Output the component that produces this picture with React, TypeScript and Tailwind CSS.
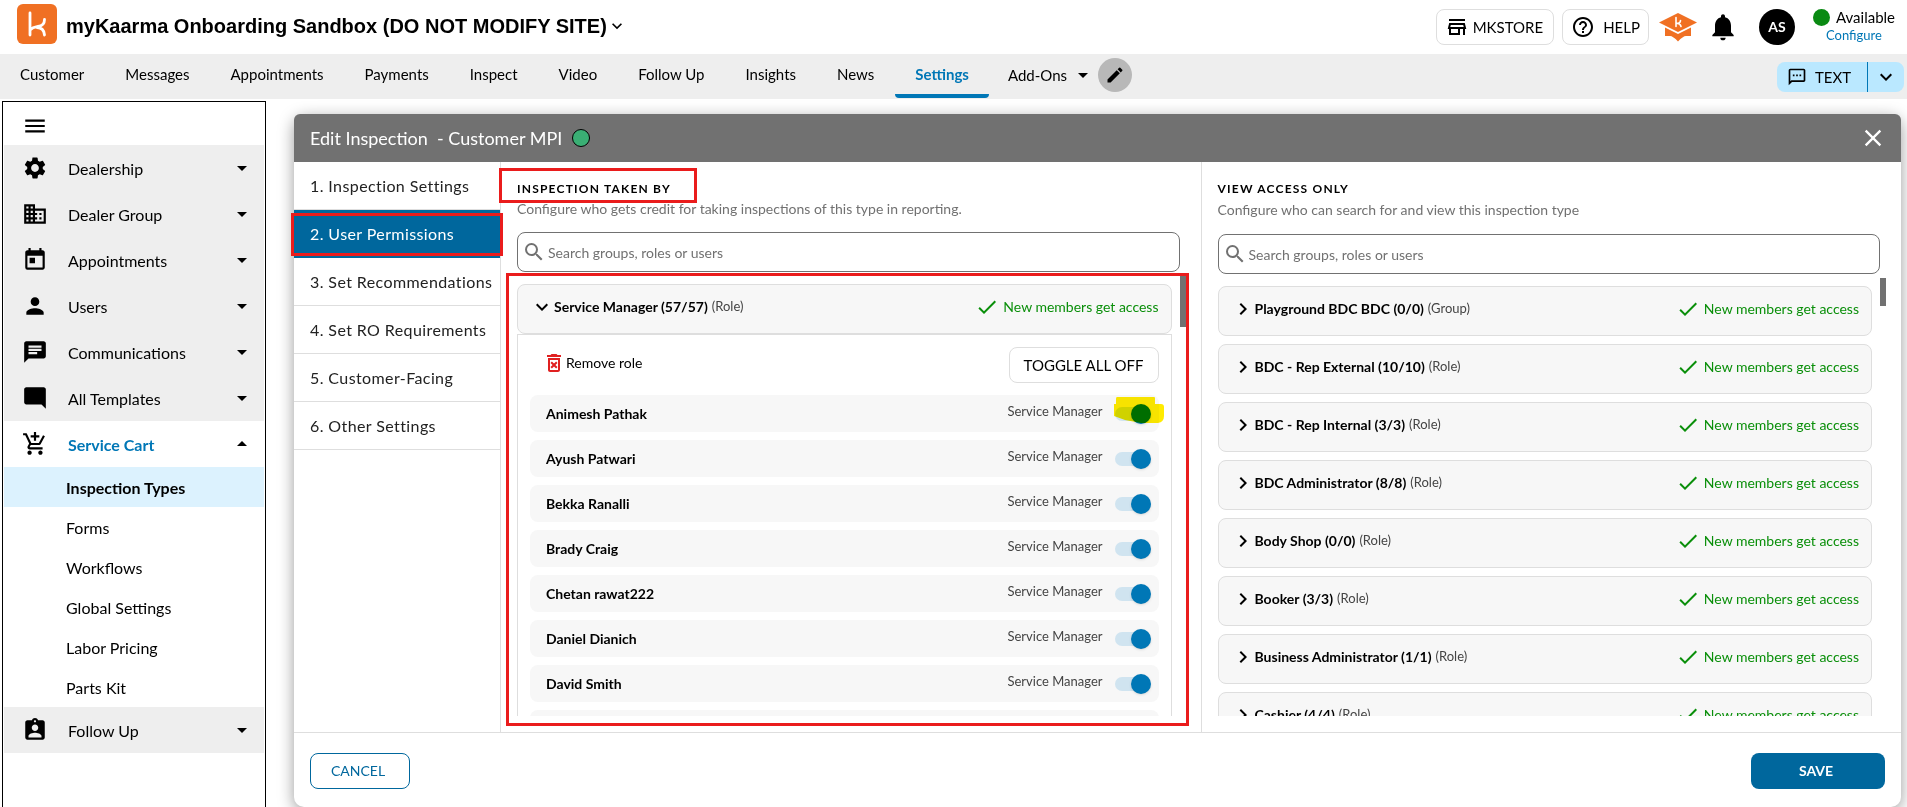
import type { ReactNode } from "react";
import type { IconType } from "react-icons";
import {
  MdAddShoppingCart,
  MdArrowDropDown,
  MdArrowDropUp,
  MdAssignmentInd,
  MdChat,
  MdCheck,
  MdChevronRight,
  MdClose,
  MdDomain,
  MdEdit,
  MdExpandMore,
  MdHelpOutline,
  MdMenu,
  MdModeComment,
  MdNotifications,
  MdOutlineDeleteForever,
  MdOutlineSms,
  MdPerson,
  MdSearch,
  MdSettings,
  MdToday,
} from "react-icons/md";

const navItems = [
  "Customer",
  "Messages",
  "Appointments",
  "Payments",
  "Inspect",
  "Video",
  "Follow Up",
  "Insights",
  "News",
  "Settings",
];

const sidebarItems: { label: string; icon: IconType }[] = [
  { label: "Dealership", icon: MdSettings },
  { label: "Dealer Group", icon: MdDomain },
  { label: "Appointments", icon: MdToday },
  { label: "Users", icon: MdPerson },
  { label: "Communications", icon: MdChat },
  { label: "All Templates", icon: MdModeComment },
];

const serviceCartItems = ["Inspection Types", "Forms", "Workflows", "Global Settings", "Labor Pricing", "Parts Kit"];

const steps = [
  "1. Inspection Settings",
  "2. User Permissions",
  "3. Set Recommendations",
  "4. Set RO Requirements",
  "5. Customer-Facing",
  "6. Other Settings",
];

const members = [
  "Animesh Pathak",
  "Ayush Patwari",
  "Bekka Ranalli",
  "Brady Craig",
  "Chetan rawat222",
  "Daniel Dianich",
  "David Smith",
];

const viewRoles = [
  { name: "Playground BDC BDC (0/0)", kind: "Group" },
  { name: "BDC - Rep External (10/10)", kind: "Role" },
  { name: "BDC - Rep Internal (3/3)", kind: "Role" },
  { name: "BDC Administrator (8/8)", kind: "Role" },
  { name: "Body Shop (0/0)", kind: "Role" },
  { name: "Booker (3/3)", kind: "Role" },
  { name: "Business Administrator (1/1)", kind: "Role" },
  { name: "Cashier (4/4)", kind: "Role" },
];

const KaarmaLogo = () => (
  <svg className="h-10 w-10" viewBox="0 0 40 40" aria-label="myKaarma" role="img">
    <rect width="40" height="40" rx="6" fill="#f07023" />
    <path
      d="M13 9v22M13 26c3-3 5-3 8-3.500 4-.5 6.500-3 6.500-7M20 23.500c4 0 7 2 7.500 7.500"
      fill="none"
      stroke="#fff"
      strokeWidth="2.800"
      strokeLinecap="round"
      strokeLinejoin="round"
    />
  </svg>
);

const StoreIcon = () => (
  <svg className="h-5 w-5" viewBox="0 0 20 20" fill="none" stroke="currentColor" strokeWidth="2" aria-hidden="true">
    <path d="M2 3h16M3 7h14l1 4H2zM3 11v6h9v-6M17 11v7" />
  </svg>
);

const CapIcon = () => (
  <svg className="h-8 w-[38px]" viewBox="0 0 38 32" aria-hidden="true">
    <path d="M19 2l19 9.500-19 9.500-19-9.500z" fill="#f07023" />
    <path d="M6 16.500l13 6.500 13-6.500V25h-5q-3 0-8 5.500Q14 25 11 25H6z" fill="#f07023" />
    <path
      d="M17 6.500v9M17 12.500c2.500 0 4.500-.5 4.500-3M18.500 12.500c2 0 3 1 3.500 3"
      fill="none"
      stroke="#fff"
      strokeWidth="1.600"
      strokeLinecap="round"
    />
  </svg>
);

const Header = () => (
  <header className="flex h-[54px] items-center justify-between pl-[17px] pr-3">
    <div className="flex items-center gap-[9px] pb-1.5">
      <KaarmaLogo />
      <button className="flex items-center pt-1 font-['Liberation_Sans',sans-serif] text-xl font-bold">
        myKaarma Onboarding Sandbox (DO NOT MODIFY SITE)
        <MdExpandMore className="h-5 w-5" />
      </button>
    </div>
    <div className="flex items-center text-[15px]">
      <button className="flex h-9 items-center gap-1.5 rounded-lg border border-[#dedede] px-2.5">
        <StoreIcon />
        MKSTORE
      </button>
      <button className="ml-2 flex h-9 items-center gap-2 rounded-lg border border-[#dedede] px-2">
        <MdHelpOutline className="h-6 w-6" />
        HELP
      </button>
      <button className="ml-2.5" aria-label="Training">
        <CapIcon />
      </button>
      <button className="ml-2.5" aria-label="Notifications">
        <MdNotifications className="h-8 w-8" />
      </button>
      <button className="ml-5 flex h-9 w-9 items-center justify-center rounded-full bg-black text-sm font-bold text-white">
        AS
      </button>
      <div className="ml-[18px] flex flex-col items-center pb-1">
        <span className="flex items-center gap-1.5 leading-5">
          <span className="h-[17px] w-[17px] rounded-full bg-[#0a8a12]" />
          Available
        </span>
        <a href="#" className="text-[13px] leading-4 text-[#0077b6]">
          Configure
        </a>
      </div>
    </div>
  </header>
);

const Navbar = () => (
  <nav className="flex h-[45px] items-start justify-between bg-[#eeeeee] pr-[3px] text-[15px]">
    <div className="flex h-full items-start gap-px">
      {navItems.map((item) =>
        item === "Settings" ? (
          <a
            key={item}
            href="#"
            className="h-11 rounded-b-sm border-b-4 border-[#0077b6] px-5 pt-[9px] font-bold text-[#0077b6]"
          >
            {item}
          </a>
        ) : (
          <a key={item} href="#" className="h-11 px-5 pt-[9px]">
            {item}
          </a>
        )
      )}
      <button className="flex items-center gap-1 pl-[18px] pt-[9px]">
        Add-Ons
        <MdArrowDropDown className="h-6 w-6" />
      </button>
      <button
        className="ml-0.5 mt-1 flex h-[34px] w-[34px] items-center justify-center rounded-full bg-[#b8b8b8]"
        aria-label="Edit menu"
      >
        <MdEdit className="h-5 w-5" />
      </button>
    </div>
    <div className="mt-2 flex h-[30px] rounded-lg bg-[#bae8ff]">
      <button className="flex items-center gap-2 pl-2.5 pr-4">
        <MdOutlineSms className="h-5 w-5" />
        TEXT
      </button>
      <button className="flex w-[37px] items-center justify-center border-l border-[#0077b6]" aria-label="More text options">
        <MdExpandMore className="h-6 w-6" />
      </button>
    </div>
  </nav>
);

const SidebarRow = ({ label, icon: Icon }: { label: string; icon: IconType }) => (
  <button className="flex h-[46px] w-full items-center bg-[#eeeeee] pl-[18px] pr-2.5">
    <Icon className="h-[26px] w-[26px]" />
    <span className="ml-5 mt-0.5 flex-1 text-left">{label}</span>
    <MdArrowDropDown className="h-6 w-6" />
  </button>
);

const Sidebar = () => (
  <aside className="ml-0.5 mt-0.5 w-[264px] shrink-0 border border-b-0 border-black px-px">
    <button className="flex h-[43px] items-center pl-[18px] pt-1" aria-label="Menu">
      <MdMenu className="h-[26px] w-[26px]" />
    </button>
    {sidebarItems.map((item) => (
      <SidebarRow key={item.label} {...item} />
    ))}
    <button className="flex h-[46px] w-full items-center pl-[18px] pr-2.5">
      <MdAddShoppingCart className="h-[26px] w-[26px]" />
      <span className="ml-5 mt-0.5 flex-1 text-left font-bold text-[#0077b6]">Service Cart</span>
      <MdArrowDropUp className="h-6 w-6" />
    </button>
    {serviceCartItems.map((item) =>
      item === "Inspection Types" ? (
        <a key={item} href="#" className="flex h-10 items-center bg-[#dcf2fe] pl-[62px] pt-0.5 font-bold">
          {item}
        </a>
      ) : (
        <a key={item} href="#" className="flex h-10 items-center pl-[62px] pt-0.5">
          {item}
        </a>
      )
    )}
    <SidebarRow label="Follow Up" icon={MdAssignmentInd} />
  </aside>
);

const SearchBox = ({ id }: { id: string }) => (
  <div className="flex h-10 shrink-0 items-center rounded-lg border border-[#717171] pl-1">
    <label htmlFor={id} aria-label="Search">
      <MdSearch className="h-6 w-6 text-[#717171]" />
    </label>
    <input
      id={id}
      type="text"
      placeholder="Search groups, roles or users"
      className="ml-0.5 h-full flex-1 bg-transparent text-sm placeholder-[#717171] outline-none"
    />
  </div>
);

const NewMembers = () => (
  <span className="flex items-center gap-1 text-sm text-[#0a8f0a]">
    <MdCheck className="h-6 w-6" />
    New members get access
  </span>
);

const RoleCard = ({ name, kind, open }: { name: string; kind: string; open?: boolean }) => (
  <button className="flex h-[50px] w-full shrink-0 items-center rounded-lg border border-[#dedede] bg-[#f7f7f7] px-3 pb-1">
    {open ? <MdExpandMore className="h-6 w-6" /> : <MdChevronRight className="h-6 w-6" />}
    <span className="text-sm font-bold">{name}</span>
    <span className="ml-1 flex-1 text-left text-[13px] text-[#444444]">({kind})</span>
    <NewMembers />
  </button>
);

const MemberRow = ({ name, highlighted }: { name: string; highlighted?: boolean }) => {
  const id = name.toLowerCase().replace(" ", "-");
  return (
    <li className="flex h-[37px] shrink-0 items-center rounded-lg bg-[#f7f7f7] pl-4 pr-2">
      <label htmlFor={id} className="flex-1 text-sm font-bold">
        {name}
      </label>
      <span className="mr-3 pb-1 text-[13px] text-[#444444]">Service Manager</span>
      <span className="relative flex items-center">
        <input
          id={id}
          type="checkbox"
          role="switch"
          defaultChecked
          className="relative h-3.5 w-9 appearance-none before:absolute before:inset-y-0 before:left-0 before:w-8 before:rounded-full before:bg-[#d0e4f0] after:absolute after:-top-[3px] after:right-0 after:h-5 after:w-5 after:rounded-full after:bg-[#0077b6] after:shadow"
        />
        {highlighted && (
          <svg
            className="pointer-events-none absolute -left-px -top-2.5 h-[27px] w-[50px] mix-blend-multiply"
            viewBox="0 0 50 27"
            aria-hidden="true"
          >
            <path d="M3 0h37q1 0 1 1v6h6q3 0 3 3v9q0 6-6 7H27L11 23 0 19V7h2V2q0-2 1-2z" fill="#ffeb00" />
          </svg>
        )}
      </span>
    </li>
  );
};

const Column = ({ children }: { children: ReactNode }) => (
  <section className="relative flex min-h-0 min-w-0 flex-1 flex-col pb-4 pl-4 pr-[21px] pt-[19px]">{children}</section>
);

const TakenBy = () => (
  <Column>
    <h2 className="mb-px text-xs font-bold leading-4 tracking-widest">INSPECTION TAKEN BY</h2>
    <span className="pointer-events-none absolute -left-0.5 top-1.5 h-[35px] w-[198px] border-[3px] border-[#ea1c1c]" />
    <p className="mb-3 text-sm leading-[22px] text-[#717171]">
      Configure who gets credit for taking inspections of this type in reporting.
    </p>
    <SearchBox id="taken-by-search" />
    <div className="mt-1 flex min-h-0 flex-1">
      <div className="min-w-0 flex-1 overflow-hidden pr-2 pt-2">
        <RoleCard name="Service Manager (57/57)" kind="Role" open />
        <div className="border-x border-t border-[#dedede] px-3">
          <div className="flex items-start justify-between pb-3 pl-3 pt-3">
            <button className="mt-1 flex items-center text-sm">
              <MdOutlineDeleteForever className="h-6 w-6 text-[#e02020]" />
              Remove role
            </button>
            <button className="h-9 rounded-lg border border-[#dedede] px-3.5 text-[15px]">TOGGLE ALL OFF</button>
          </div>
          <ul className="flex flex-col gap-2">
            {members.map((name, index) => (
              <MemberRow key={name} name={name} highlighted={index === 0} />
            ))}
            <li className="h-[37px] shrink-0 rounded-lg bg-[#f7f7f7]" />
          </ul>
        </div>
      </div>
      <div className="-mr-1.5 h-[51px] w-1.5 bg-[#717171]" />
    </div>
    <span className="pointer-events-none absolute bottom-1.5 left-[5px] right-3 top-[111px] border-[3px] border-[#ea1c1c]" />
  </Column>
);

const ViewAccess = () => (
  <Column>
    <h2 className="mb-px text-xs font-bold leading-4 tracking-widest">VIEW ACCESS ONLY</h2>
    <p className="mb-3 text-sm leading-6 text-[#717171]">Configure who can search for and view this inspection type</p>
    <SearchBox id="view-access-search" />
    <div className="mt-1 flex min-h-0 flex-1">
      <div className="flex min-w-0 flex-1 flex-col gap-2 overflow-hidden pr-2 pt-2">
        {viewRoles.map((role) => (
          <RoleCard key={role.name} {...role} />
        ))}
      </div>
      <div className="-mr-1.5 h-7 w-1.5 bg-[#717171]" />
    </div>
  </Column>
);

const Steps = () => (
  <div className="w-[207px] shrink-0 border-r border-[#dedede] tracking-wide text-[#222222]">
    {steps.map((step, index) =>
      index === 1 ? (
        <div key={step} className="relative bg-[#00679d] text-white">
          <button className="flex h-12 w-full items-center whitespace-nowrap px-4">{step}</button>
          <span className="pointer-events-none absolute -left-[3px] -right-[3px] bottom-0.5 top-[3px] border-[3px] border-[#ea1c1c]" />
        </div>
      ) : (
        <button key={step} className="flex h-12 w-full items-center whitespace-nowrap border-b border-[#dedede] px-4">
          {step}
        </button>
      )
    )}
  </div>
);

const EditInspection = () => (
  <div className="flex min-w-0 flex-1 flex-col rounded-[10px] bg-white shadow-[0_4px_16px_rgba(0,0,0,0.4)]">
    <div className="flex h-12 shrink-0 items-center rounded-t-md bg-[#717171] pl-4 pr-3.5 text-white">
      <h1 className="whitespace-pre text-lg leading-6">Edit Inspection  - Customer MPI</h1>
      <span className="ml-2.5 h-[18px] w-[18px] rounded-full border border-black bg-[#3aaf74]" />
      <button className="ml-auto" aria-label="Close">
        <MdClose className="h-7 w-7" />
      </button>
    </div>
    <div className="flex min-h-0 flex-1">
      <Steps />
      <TakenBy />
      <div className="w-px bg-[#dedede]" />
      <ViewAccess />
    </div>
    <div className="flex shrink-0 items-center justify-between border-t border-[#dedede] px-4 pb-[18px] pt-5">
      <button className="h-9 w-[100px] rounded-lg border border-[#00679d] pr-1 text-sm text-[#00679d]">CANCEL</button>
      <button className="h-9 w-[134px] rounded-lg bg-[#00679d] pr-1 text-sm font-bold text-white">SAVE</button>
    </div>
  </div>
);

export default function App() {
  return (
    <div className="flex h-screen flex-col overflow-hidden bg-white font-['Lato',sans-serif] text-base text-black">
      <Header />
      <Navbar />
      <div className="flex min-h-0 flex-1">
        <Sidebar />
        <main className="flex min-w-0 flex-1 pl-7 pr-1.5 pt-[15px]">
          <EditInspection />
        </main>
      </div>
    </div>
  );
}
